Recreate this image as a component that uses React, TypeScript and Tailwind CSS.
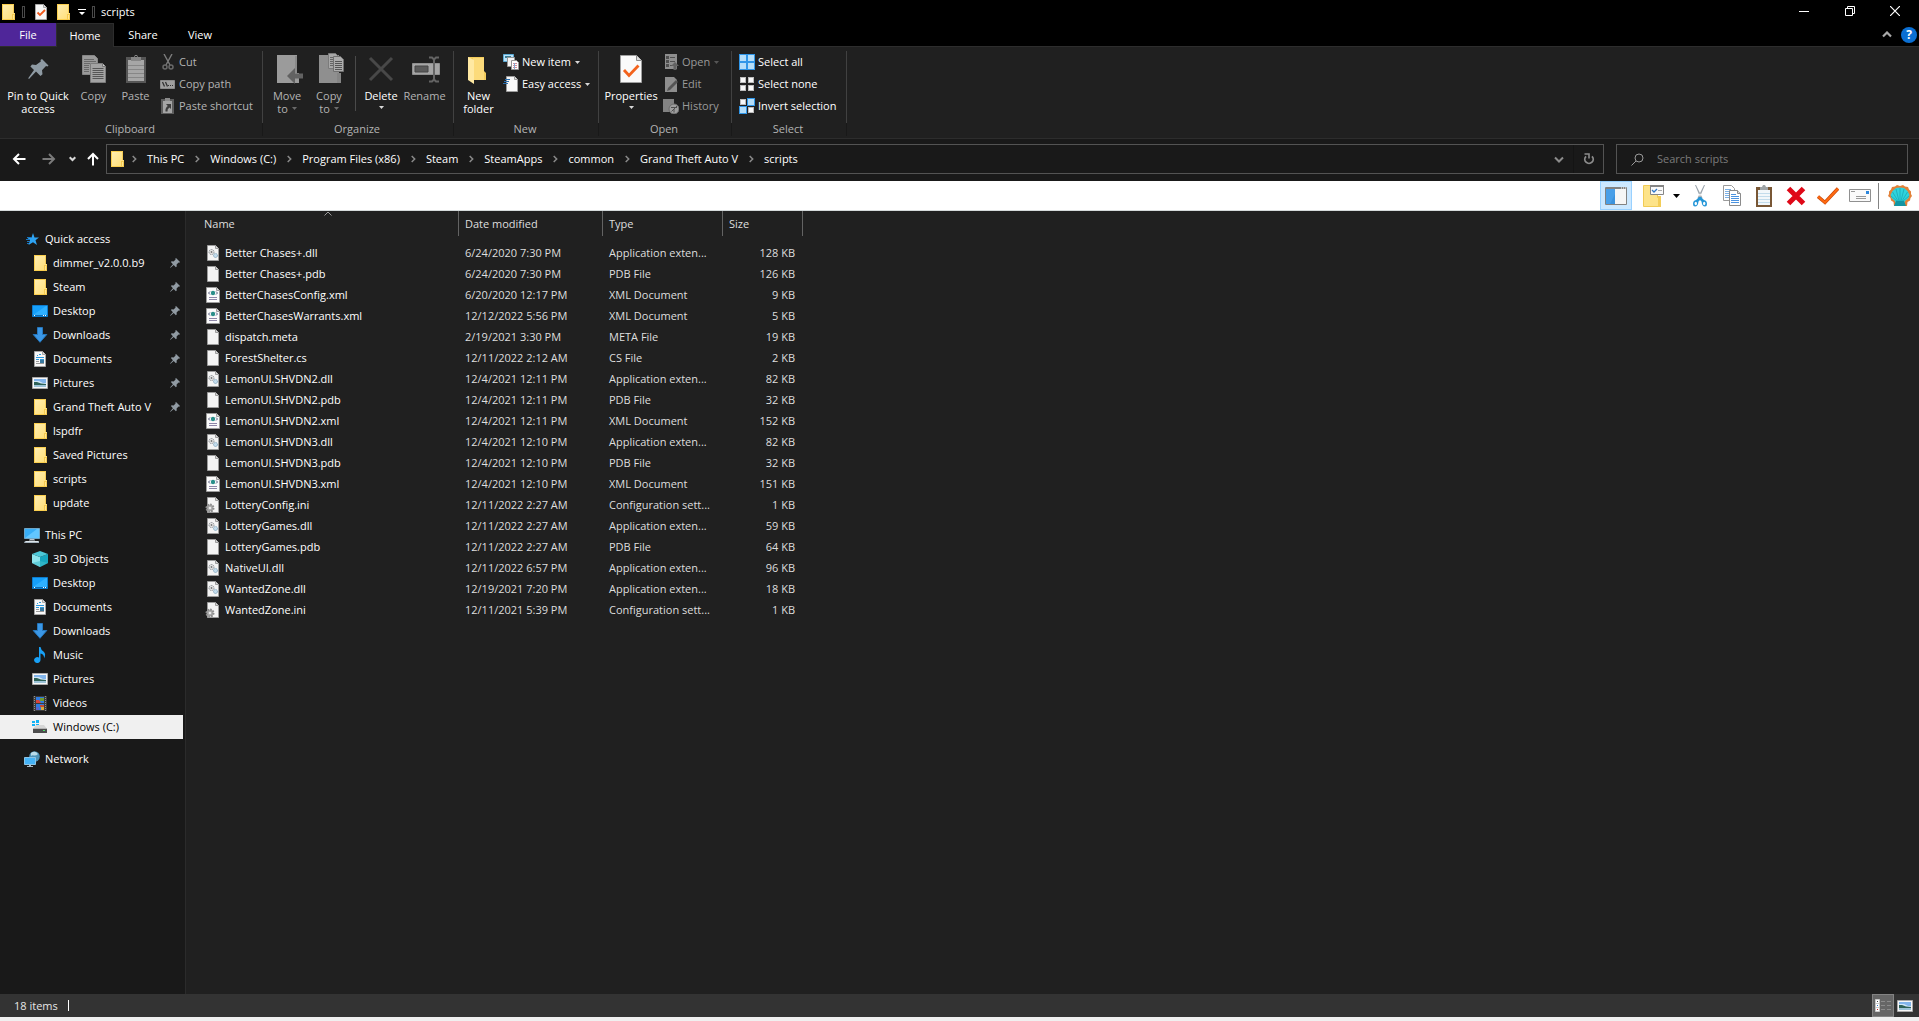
import React from "react";

type IconProps = { className?: string };

/* ---------- Small glyphs ---------- */

function FolderIcon({ className = "" }: IconProps) {
  return (
    <svg width="16" height="16" viewBox="0 0 16 16" className={className} aria-hidden="true">
      <defs>
        <linearGradient id="folderFill" x1="0" y1="0" x2="1" y2="1">
          <stop offset="0" stopColor="#ffefb5" />
          <stop offset="1" stopColor="#ffdd72" />
        </linearGradient>
      </defs>
      <path d="M2 0h12v9h1v7H2z" fill="url(#folderFill)" />
      <path d="M2 0h12v1H3v14h9v1H2z" fill="#fbcf4e" />
      <path d="M13 0h1v9h-1z" fill="#f7cd57" />
      <path d="M12 10h3v6h-3z" fill="#f5ca50" />
      <path d="M13 11h1v4h-1z" fill="#ffe694" />
    </svg>
  );
}

function PropertiesSmallIcon() {
  return (
    <svg width="16" height="16" viewBox="0 0 16 16" aria-hidden="true">
      <path d="M2.500.500h8l3 3v12h-11z" fill="#f7f7f7" stroke="#a8a8a8" />
      <path d="M10.500.500v3h3" fill="#ddd" stroke="#a8a8a8" />
      <path d="M4.500 8.500l2.500 2.500 5-5" fill="none" stroke="#f0591c" strokeWidth="1.800" />
    </svg>
  );
}

function CaretDown({ className = "" }: IconProps) {
  return (
    <svg width="5" height="3" viewBox="0 0 5 3" className={className} aria-hidden="true">
      <path d="M0 0h5L2.500 3z" fill="currentColor" />
    </svg>
  );
}

function Chevron({ className = "" }: IconProps) {
  return (
    <svg width="5" height="8" viewBox="0 0 5 8" className={className} aria-hidden="true">
      <path d="M.7 1l3 3-3 3" fill="none" stroke="#8a8a8a" strokeWidth="1.500" />
    </svg>
  );
}

function PinSmall() {
  return (
    <svg width="10" height="10" viewBox="0 0 10 10" aria-hidden="true">
      <path d="M6 0l4 4-.8.8-.7-.2-1.900 2 .1 1.900-.8.7-2.200-2.200L.5 9.800 0 9.500 2.900 6.200.9 4.100l.8-.8 1.900.1 2-1.900-.3-.8z" fill="#919ba3" />
    </svg>
  );
}

/* ---------- Ribbon icons ---------- */

function PinLarge() {
  return (
    <svg width="32" height="32" viewBox="0 0 32 32" aria-hidden="true">
      <path d="M20 6l6.500 6.500-1 1-1.500-.5-4 4.200.5 4-2 1.800-4.500-4.500-7 7.500-.8-.7 5.800-8.300-3.600-3.500 1.600-2 4 .5 4.800-3.500-.3-1.500z" fill="#8e9aa3" />
    </svg>
  );
}

function CopyLarge() {
  return (
    <svg width="32" height="32" viewBox="0 0 32 32" aria-hidden="true">
      <path d="M4.500 2.500h12l3 3v16h-15z" fill="#9a9a9a" stroke="#868686" />
      <path d="M6 6.500h10M6 8.500h12M6 10.500h6M6 12.500h5M6 14.500h5M6 16.500h5M6 18.500h5" stroke="#696969" />
      <path d="M12.500 10.500h12l3 3v16h-15z" fill="#a3a3a3" stroke="#7c7c7c" />
      <path d="M24.500 10.500v3h3" fill="#ccc" stroke="#777" />
      <path d="M14.500 15.500h11M14.500 17.500h11M14.500 19.500h11M14.500 21.500h11M14.500 23.500h11M14.500 25.500h11" stroke="#555" />
    </svg>
  );
}

function PasteLarge() {
  return (
    <svg width="32" height="32" viewBox="0 0 32 32" aria-hidden="true">
      <path d="M6 4h20v26H6z" fill="#565656" />
      <path d="M8 7h16v21H8z" fill="#a6a6a6" />
      <path d="M8 12.500h16M8 16.500h16M8 20.500h16M8 24.500h16" stroke="#868686" />
      <path d="M11 4h3l1-2h2l1 2h3v4H11z" fill="#858585" />
      <path d="M15 3h2v1h-2z" fill="#222" />
    </svg>
  );
}

function CutSmall() {
  return (
    <svg width="16" height="16" viewBox="0 0 16 16" aria-hidden="true">
      <path d="M4 0l6 11M12 0L6 11" stroke="#7c7c7c" strokeWidth="1.400" />
      <circle cx="5" cy="13" r="2" fill="none" stroke="#696969" strokeWidth="1.500" />
      <circle cx="11" cy="13" r="2" fill="none" stroke="#696969" strokeWidth="1.500" />
    </svg>
  );
}

function CopyPathSmall() {
  return (
    <svg width="16" height="16" viewBox="0 0 16 16" aria-hidden="true">
      <path d="M.5 4.500h14v8H.5z" fill="#a0a0a0" stroke="#8b8b8b" />
      <path d="M2.500 6l2 4.500M5.500 6l2 4.500" stroke="#333" strokeWidth="1.300" />
      <path d="M8 9h1v1H8zM10 9h1v1h-1zM12 9h1v1h-1z" fill="#333" />
    </svg>
  );
}

function PasteShortcutSmall() {
  return (
    <svg width="16" height="16" viewBox="0 0 16 16" aria-hidden="true">
      <path d="M1 1h13v15H1z" fill="#5d5d5d" />
      <path d="M3 3h9v12H3z" fill="#a4a4a4" />
      <path d="M5 0h5v3H5z" fill="#8a8a8a" />
      <path d="M6 6h5v5L9.500 9.500Q7 11 7.500 13.500H5.500Q5 10 7.800 8z" fill="#3d3d3d" />
    </svg>
  );
}

function MoveToLarge() {
  return (
    <svg width="32" height="32" viewBox="0 0 32 32" aria-hidden="true">
      <path d="M6 2h20v18h2v10H6z" fill="#9b9b9b" />
      <path d="M24 3h2v17h-2z" fill="#8a8a8a" />
      <path d="M16 23l8-8v5.500h8v5h-8V31z" fill="#626262" />
    </svg>
  );
}

function CopyToLarge() {
  return (
    <svg width="32" height="32" viewBox="0 0 32 32" aria-hidden="true">
      <path d="M6 2h20v18h2v10H6z" fill="#8f8f8f" />
      <path d="M24 20h4v10h-4z" fill="#858585" />
      <path d="M15.500.5h7l3 3v12h-10z" fill="#a8a8a8" stroke="#7b7b7b" />
      <path d="M17 4.500h6M17 6.500h3M17 8.500h3M17 10.500h3M17 12.500h3" stroke="#666" />
      <path d="M20.500 3.500h7l3 3v12h-10z" fill="#adadad" stroke="#707070" />
      <path d="M22 8.500h7M22 10.500h7M22 12.500h7M22 14.500h7M22 16.500h7" stroke="#555" />
    </svg>
  );
}

function DeleteLarge() {
  return (
    <svg width="32" height="32" viewBox="0 0 32 32" aria-hidden="true">
      <path d="M5 5l22 22M27 5L5 27" stroke="#484848" strokeWidth="3" />
    </svg>
  );
}

function RenameLarge() {
  return (
    <svg width="32" height="32" viewBox="0 0 32 32" aria-hidden="true">
      <path d="M3.500 10.500h27v11h-27z" fill="#a5a5a5" stroke="#8f8f8f" />
      <path d="M6 13h13v6H6z" fill="#5a5a5a" stroke="#444" strokeWidth="1" />
      <path d="M20 4.500h3l2 2 2-2h3M20 28.500h3l2-2 2 2h3M25 6v21" fill="none" stroke="#646464" strokeWidth="2" />
    </svg>
  );
}

function NewFolderLarge() {
  return (
    <svg width="32" height="32" viewBox="0 0 32 32" aria-hidden="true">
      <path d="M5 4h16v14l2 2v7H5z" fill="#f3cc5c" />
      <path d="M10 5h11v22H10z" fill="#fcdb7b" />
      <path d="M5 4l6 3v24l-6-4z" fill="#ffe9a3" />
    </svg>
  );
}

function NewItemSmall() {
  return (
    <svg width="16" height="16" viewBox="0 0 16 16" aria-hidden="true">
      <path d="M.5.500h10v7H.5z" fill="#b9e2fa" stroke="#5caad4" />
      <path d="M2 2h6v2H2z" fill="#3b7b91" />
      <path d="M4.500 3.500h7v9h-7z" fill="#f4f4f4" stroke="#969696" />
      <path d="M8.500 6.500h5l2 2v7h-7z" fill="#fff" stroke="#969696" />
      <path d="M10 9.500h4M10 11.500h4M10 13.500h4" stroke="#d38d9b" />
      <path d="M11.500 9v6" stroke="#87acd6" />
    </svg>
  );
}

function EasyAccessSmall() {
  return (
    <svg width="16" height="16" viewBox="0 0 16 16" aria-hidden="true">
      <path d="M3.500.500h8l3 3v12h-11z" fill="#f8f8f8" stroke="#9d9d9d" />
      <path d="M11.500.500v3h3" fill="#ddd" stroke="#9d9d9d" />
      <path d="M2 3.500h5M1 5.500h5M0 7.500h5" stroke="#2b6fae" />
    </svg>
  );
}

function PropertiesLarge() {
  return (
    <svg width="32" height="32" viewBox="0 0 32 32" aria-hidden="true">
      <path d="M5.500 2.500h16l5 5v22h-21z" fill="#fafafa" stroke="#a0a0a0" />
      <path d="M21.500 2.500v5h5" fill="#ddd" stroke="#8b8b8b" />
      <path d="M9 17l5 5.500L23.500 12.500" fill="none" stroke="#f3631d" strokeWidth="2.800" />
    </svg>
  );
}

function OpenSmall() {
  return (
    <svg width="16" height="16" viewBox="0 0 16 16" aria-hidden="true">
      <path d="M2 0h12v15H2z" fill="#8e8e8e" />
      <path d="M3 2h3v3H3zM3 6h3v3H3zM3 10h3v3H3z" fill="#4f4f4f" />
      <path d="M7 3.500h5M7 7.500h5M7 11.500h3" stroke="#4f4f4f" />
      <path d="M8 12l4-4 4 4h-2.500v4h-3v-4z" fill="#626262" />
    </svg>
  );
}

function EditSmall() {
  return (
    <svg width="16" height="16" viewBox="0 0 16 16" aria-hidden="true">
      <path d="M2 1h9l3 3v12H2z" fill="#8e8e8e" />
      <path d="M4 15l1-3 8-8 2 2-8 8z" fill="#545454" />
    </svg>
  );
}

function HistorySmall() {
  return (
    <svg width="16" height="16" viewBox="0 0 16 16" aria-hidden="true">
      <path d="M0 1h11v7h1v6H0z" fill="#828282" />
      <circle cx="11" cy="11" r="5" fill="#9d9d9d" stroke="#6b6b6b" />
      <path d="M8.500 13.500L14 8M8 9.500h6M11 11v3.500" stroke="#4e4e4e" fill="none" />
    </svg>
  );
}

function Tile({ x, y, on }: { x: number; y: number; on: boolean }) {
  return on ? (
    <rect x={x + 0.5} y={y + 0.5} width="7" height="7" fill="#b5def9" stroke="#3096e8" />
  ) : (
    <rect x={x + 1.5} y={y + 1.5} width="5" height="5" fill="#f8f8f8" stroke="#bcbcbc" />
  );
}

function TilesIcon({ on }: { on: boolean[] }) {
  return (
    <svg width="16" height="16" viewBox="0 0 16 16" aria-hidden="true">
      <Tile x={0} y={0} on={on[0]} />
      <Tile x={8} y={0} on={on[1]} />
      <Tile x={0} y={8} on={on[2]} />
      <Tile x={8} y={8} on={on[3]} />
    </svg>
  );
}

/* ---------- Navigation pane icons ---------- */

function StarIcon() {
  return (
    <svg width="16" height="16" viewBox="0 0 16 16" aria-hidden="true">
      <path d="M9 2l1.500 4.500H15L11.500 9.300l1.500 4.700-4-2.800L4.500 14 6 9.300 3 6.500h4.500z" fill="#2ea3f2" />
      <path d="M3 6.500h4M2 8.500h4M3 10.500h3M3 12.500h2" stroke="#1b76bd" />
    </svg>
  );
}

function DesktopIcon() {
  return (
    <svg width="16" height="16" viewBox="0 0 16 16" aria-hidden="true">
      <path d="M.5 2.500h15v11H.5z" fill="#16a0fb" stroke="#0d7ccd" />
      <path d="M1 12L14 3h1v9z" fill="#2fb0ff" />
      <path d="M1 12h14v1H1z" fill="#0c6cb5" />
      <path d="M2 12h1v1H2zM11 12h1v1h-1zM13 12h1v1h-1z" fill="#fff" />
    </svg>
  );
}

function DownloadsIcon() {
  return (
    <svg width="16" height="16" viewBox="0 0 16 16" aria-hidden="true">
      <path d="M5.500.500h5v7h4.300L8 15.300 1.200 7.500h4.300z" fill="#3b97e6" stroke="#2577bd" />
    </svg>
  );
}

function DocumentsIcon() {
  return (
    <svg width="16" height="16" viewBox="0 0 16 16" aria-hidden="true">
      <path d="M2.500.500h8l3 3v12h-11z" fill="#f8f8f8" stroke="#a5a5a5" />
      <path d="M10.500.500v3h3" fill="#ddd" stroke="#a5a5a5" />
      <path d="M5 4.500h1M7 3.500h2M4 6.500h8M4 8.500h3M8 8.500h4" stroke="#2d9ade" />
      <path d="M4 10.500h3M4 12.500h8" stroke="#9a9a9a" />
      <path d="M8 9h4v3H8z" fill="#39799f" />
    </svg>
  );
}

function PicturesIcon() {
  return (
    <svg width="16" height="16" viewBox="0 0 16 16" aria-hidden="true">
      <path d="M.5 2.500h15v11H.5z" fill="#f7f7f7" stroke="#a9a9a9" />
      <path d="M2 4h12v8H2z" fill="#82b5ec" />
      <path d="M2 6h5l4 2h3v1H2z" fill="#cfe6f8" />
      <path d="M2 7l3 0 4 1.500 5 .5v2H2z" fill="#2e6257" />
      <path d="M2 10h12v2H2z" fill="#9cc3d8" />
    </svg>
  );
}

function ThisPcIcon() {
  return (
    <svg width="16" height="16" viewBox="0 0 16 16" aria-hidden="true">
      <path d="M.5 1.500h15v10H.5z" fill="#38aef7" stroke="#6ea6c8" />
      <path d="M1 11L13 2h2v9z" fill="#62c6ff" />
      <path d="M6 12h4v1H6zM5 12.500h6v1H5z" fill="#b9c4cc" />
      <path d="M1 14h14v2H0z" fill="#a7b4be" />
      <path d="M2 14.500h12" stroke="#dde5ea" />
    </svg>
  );
}

function ObjectsIcon() {
  return (
    <svg width="16" height="16" viewBox="0 0 16 16" aria-hidden="true">
      <path d="M0 3l8 3v10l-8-4z" fill="#8ee6ee" />
      <path d="M16 3L8 6v10l8-4z" fill="#17a7c0" />
      <path d="M0 3l8-3 8 3-8 3z" fill="#4cc9d9" />
      <path d="M0 12l8-2 8 2-8 4z" fill="#40bccb" opacity=".6" />
    </svg>
  );
}

function MusicIcon() {
  return (
    <svg width="16" height="16" viewBox="0 0 16 16" aria-hidden="true">
      <path d="M7 0h1.500Q9 3 11.500 4.500 14.500 7 12 11.500q.500-4-3.500-5V13a3.200 3 0 1 1-1.500-2.500z" fill="#18a0f5" />
    </svg>
  );
}

function VideosIcon() {
  return (
    <svg width="16" height="16" viewBox="0 0 16 16" aria-hidden="true">
      <path d="M1 1h14v15H1z" fill="#3b3b3b" />
      <path d="M2.500 1v15M13.500 1v15" stroke="#909090" strokeDasharray="1 1" />
      <path d="M4 2h8v6H4zM4 9h8v6H4z" fill="#2f7be0" />
      <path d="M4 5h3l2 3H4z" fill="#d8433a" />
      <path d="M8 3h4v3H8z" fill="#6f9a2f" />
      <path d="M8 10h4v2H8z" fill="#c54a35" />
      <path d="M4 12h3v3H4z" fill="#5b64c8" />
      <path d="M9 12h3v3H9z" fill="#d8aa3a" />
    </svg>
  );
}

function DriveIcon() {
  return (
    <svg width="16" height="16" viewBox="0 0 16 16" aria-hidden="true">
      <path d="M0 2h3v2H0zM4 1h3v3H4zM0 5h3v2H0zM4 5h3v3H4z" fill="#12b2f5" />
      <path d="M4 6h8l3 4H1z" fill="#d6d6d6" />
      <path d="M1 10h14v4H1z" fill="#4d4d4d" />
      <path d="M1 9h14v1H1z" fill="#b5b5b5" />
      <path d="M11 11h2v1h-2z" fill="#4fe06a" />
    </svg>
  );
}

function NetworkIcon() {
  return (
    <svg width="16" height="16" viewBox="0 0 16 16" aria-hidden="true">
      <circle cx="10.500" cy="5.500" r="5.300" fill="#4d93b8" />
      <path d="M7 2q4-3 7 1-2 2-4 1.500T7 5z" fill="#b9dbea" />
      <path d="M.5 6.500h11v7H.5z" fill="#45b3f7" stroke="#8cc4e6" />
      <path d="M5 14h2v1H5zM3 15h6v1H3z" fill="#a9bac6" />
    </svg>
  );
}

/* ---------- File icons ---------- */

function Page() {
  return (
    <>
      <path d="M2.500.500h8l3 3v12h-11z" fill="#f4f4f4" stroke="#9c9c9c" />
      <path d="M10.500.500v3h3" fill="#d8d8d8" stroke="#9c9c9c" />
    </>
  );
}

type FileKind = "dll" | "plain" | "xml" | "ini";

function FileIcon({ kind }: { kind: FileKind }) {
  return (
    <svg width="16" height="16" viewBox="0 0 16 16" aria-hidden="true">
      {kind === "xml" ? (
        <>
          <path d="M1.500.500h10l3 3v12h-13z" fill="#fbfbfb" stroke="#9c9c9c" />
          <path d="M11.500.500v3h3" fill="#d8d8d8" stroke="#9c9c9c" />
          <circle cx="8" cy="6" r="2.200" fill="#2b8f8a" />
          <path d="M5 4.500L3.500 6 5 7.500M11 4.500L12.500 6 11 7.500" fill="none" stroke="#555c80" />
          <path d="M4 10.500h8M4 12.500h8" stroke="#8e86a8" />
        </>
      ) : (
        <Page />
      )}
      {kind === "dll" && (
        <>
          <circle cx="6.500" cy="7" r="2.500" fill="#e4e4e4" stroke="#8b8f94" strokeDasharray="1.500 .7" />
          <circle cx="6.500" cy="7" r=".9" fill="#777" />
          <circle cx="10.500" cy="10.500" r="2" fill="#c3dcec" stroke="#7fa3bb" strokeDasharray="1.200 .6" />
        </>
      )}
      {kind === "ini" && (
        <>
          <circle cx="5" cy="11" r="3.500" fill="#a7a7a7" stroke="#8d8d8d" strokeWidth="2" strokeDasharray="1.600 1.100" />
          <circle cx="5" cy="11" r="1.300" fill="#e9e9e9" />
        </>
      )}
    </svg>
  );
}

/* ---------- Ribbon pieces ---------- */

function BigButton({
  icon,
  lines,
  width,
  caret,
  dim,
}: {
  icon: React.ReactNode;
  lines: string[];
  width: string;
  caret?: "inline" | "below";
  dim?: boolean;
}) {
  return (
    <button type="button" className={`flex flex-col items-center pt-1 ${width} ${dim ? "text-[#b4b4b4]" : "text-white"}`}>
      {icon}
      <span className="mt-1 flex flex-col items-center leading-[13px]">
        {lines.map((line, i) => (
          <span key={line} className="flex items-center gap-1 whitespace-nowrap">
            {line}
            {caret === "inline" && i === lines.length - 1 && <CaretDown className="text-[#6a6a6a]" />}
          </span>
        ))}
      </span>
      {caret === "below" && <CaretDown className="mt-1 text-[#d8d8d8]" />}
    </button>
  );
}

function SmallButton({
  icon,
  label,
  tone = "text-white",
  caret,
}: {
  icon: React.ReactNode;
  label: string;
  tone?: string;
  caret?: string;
}) {
  return (
    <button type="button" className={`flex h-[22px] items-center gap-[3px] whitespace-nowrap ${tone}`}>
      {icon}
      <span>{label}</span>
      {caret && <CaretDown className={`ml-px ${caret}`} />}
    </button>
  );
}

function RibbonGroup({ label, width, children }: { label: string; width: string; children: React.ReactNode }) {
  return (
    <section aria-label={label} className={`flex ${width}`}>
      <div className="flex min-w-0 grow flex-col">
        <div className="flex h-[73px] items-start">{children}</div>
        <div className="pr-[2px] text-center leading-[14px] text-[#b4b4b4]">{label}</div>
      </div>
      <div className="my-[2px] flex w-px flex-col">
        <div className="h-[72px] bg-[#414141]" />
        <div className="h-[13px] bg-[#191919]" />
      </div>
    </section>
  );
}

const dimTone = "text-[#b4b4b4]";

function Ribbon() {
  return (
    <div className="flex h-[93px] border-y border-[#2d2d2d] bg-[#202020] pt-[2px]">
      <RibbonGroup label="Clipboard" width="w-[263px]">
        <div className="flex pl-[3px]">
          <BigButton width="w-[70px]" icon={<PinLarge />} lines={["Pin to Quick", "access"]} />
          <BigButton width="w-[41px]" icon={<CopyLarge />} lines={["Copy"]} dim />
          <BigButton width="w-[43px]" icon={<PasteLarge />} lines={["Paste"]} dim />
        </div>
        <div className="flex flex-col pl-[3px] pt-[2px]">
          <SmallButton icon={<CutSmall />} label="Cut" tone={dimTone} />
          <SmallButton icon={<CopyPathSmall />} label="Copy path" tone={dimTone} />
          <SmallButton icon={<PasteShortcutSmall />} label="Paste shortcut" tone={dimTone} />
        </div>
      </RibbonGroup>
      <RibbonGroup label="Organize" width="w-[191px]">
        <div className="flex pl-[3px]">
          <BigButton width="w-[42px]" icon={<MoveToLarge />} lines={["Move", "to"]} caret="inline" dim />
          <BigButton width="w-[42px]" icon={<CopyToLarge />} lines={["Copy", "to"]} caret="inline" dim />
          <div className="mx-[5px] mt-[7px] h-[55px] w-px bg-[#4a4a4a]" />
          <BigButton width="w-[40px]" icon={<DeleteLarge />} lines={["Delete"]} caret="below" />
          <BigButton width="w-[47px]" icon={<RenameLarge />} lines={["Rename"]} dim />
        </div>
      </RibbonGroup>
      <RibbonGroup label="New" width="w-[145px]">
        <BigButton width="w-[49px]" icon={<NewFolderLarge />} lines={["New", "folder"]} />
        <div className="flex flex-col pt-[2px]">
          <SmallButton icon={<NewItemSmall />} label="New item" caret="text-[#d8d8d8]" />
          <SmallButton icon={<EasyAccessSmall />} label="Easy access" caret="text-[#d8d8d8]" />
        </div>
      </RibbonGroup>
      <RibbonGroup label="Open" width="w-[133px]">
        <BigButton width="w-[64px]" icon={<PropertiesLarge />} lines={["Properties"]} caret="below" />
        <div className="flex flex-col pt-[2px]">
          <SmallButton icon={<OpenSmall />} label="Open" tone="text-[#9a9a9a]" caret="text-[#565656]" />
          <SmallButton icon={<EditSmall />} label="Edit" tone="text-[#9a9a9a]" />
          <SmallButton icon={<HistorySmall />} label="History" tone="text-[#9a9a9a]" />
        </div>
      </RibbonGroup>
      <RibbonGroup label="Select" width="w-[115px]">
        <div className="flex flex-col pl-[7px] pt-[2px]">
          <SmallButton icon={<TilesIcon on={[true, true, true, true]} />} label="Select all" />
          <SmallButton icon={<TilesIcon on={[false, false, false, false]} />} label="Select none" />
          <SmallButton icon={<TilesIcon on={[false, true, true, false]} />} label="Invert selection" />
        </div>
      </RibbonGroup>
    </div>
  );
}

/* ---------- Top bars ---------- */

function TitleBar() {
  return (
    <header className="flex h-[23px] items-start bg-black text-white">
      <div className="flex items-center pt-[3px]">
        <FolderIcon />
        <span className="ml-[6px] h-3 w-[3px] border border-[#4a4a4a]" />
        <button type="button" aria-label="Properties" className="ml-2">
          <PropertiesSmallIcon />
        </button>
        <button type="button" aria-label="New folder" className="ml-[6px]">
          <FolderIcon />
        </button>
        <button type="button" aria-label="Customize Quick Access Toolbar" className="ml-[7px]">
          <svg width="8" height="8" viewBox="0 0 8 8" aria-hidden="true">
            <path d="M0 1h8v1H0zM1 4h6L4 7z" fill="#fff" />
          </svg>
        </button>
        <span className="ml-[6px] h-3 w-[3px] border border-[#4a4a4a]" />
        <h1 className="ml-[6px] leading-[18px]">scripts</h1>
      </div>
      <div className="ml-auto flex pr-[1px]">
        <button type="button" aria-label="Minimize" className="flex h-[21px] w-[46px] items-center justify-center">
          <svg width="10" height="10" viewBox="0 0 10 10" aria-hidden="true">
            <path d="M0 5.500h10" stroke="#fff" />
          </svg>
        </button>
        <button type="button" aria-label="Restore" className="flex h-[21px] w-[45px] items-center justify-center">
          <svg width="10" height="10" viewBox="0 0 10 10" aria-hidden="true">
            <path d="M.5 2.500h7v7h-7zM2.500 2.500v-2h7v7h-2" fill="none" stroke="#fff" />
          </svg>
        </button>
        <button type="button" aria-label="Close" className="flex h-[21px] w-[46px] items-center justify-center">
          <svg width="10" height="10" viewBox="0 0 10 10" aria-hidden="true">
            <path d="M0 0l10 10M10 0L0 10" stroke="#fff" strokeWidth="1.200" />
          </svg>
        </button>
      </div>
    </header>
  );
}

function Tabs() {
  return (
    <nav aria-label="Ribbon tabs" className="flex h-[23px] bg-black text-white">
      <button type="button" className="w-14 bg-[#4f2699]">File</button>
      <button type="button" className="relative -mb-px w-[58px] border border-b-0 border-[#2d2d2d] bg-[#202020]">Home</button>
      <button type="button" className="w-[58px]">Share</button>
      <button type="button" className="w-[56px]">View</button>
      <div className="ml-auto flex items-center gap-[9px] pr-[2px]">
        <button type="button" aria-label="Minimize the Ribbon">
          <svg width="10" height="7" viewBox="0 0 10 7" aria-hidden="true">
            <path d="M1 5.500l4-4 4 4" fill="none" stroke="#a9a9a9" strokeWidth="2.200" />
          </svg>
        </button>
        <button type="button" aria-label="Help" className="size-4 rounded-full bg-[#0b6fd3] text-[12px] font-bold leading-4">
          ?
        </button>
      </div>
    </nav>
  );
}

const crumbs = ["This PC", "Windows (C:)", "Program Files (x86)", "Steam", "SteamApps", "common", "Grand Theft Auto V", "scripts"];

function AddressBar() {
  return (
    <div className="flex h-[42px] items-center bg-[#191919] pb-[2px] pr-[11px] text-white">
      <div className="flex items-center pl-3">
        <button type="button" aria-label="Back">
          <svg width="14" height="14" viewBox="0 0 14 14" aria-hidden="true">
            <path d="M13.500 7H2M7 2L2 7l5 5" fill="none" stroke="#fff" strokeWidth="2" />
          </svg>
        </button>
        <button type="button" aria-label="Forward" className="ml-4">
          <svg width="14" height="14" viewBox="0 0 14 14" aria-hidden="true">
            <path d="M.5 7H12M7 2l5 5-5 5" fill="none" stroke="#7a7a7a" strokeWidth="2" />
          </svg>
        </button>
        <button type="button" aria-label="Recent locations" className="ml-[13px]">
          <svg width="7" height="6" viewBox="0 0 7 6" aria-hidden="true">
            <path d="M.7 1.200l2.800 2.800 2.800-2.800" fill="none" stroke="#d8d8d8" strokeWidth="2" />
          </svg>
        </button>
        <button type="button" aria-label="Up" className="ml-[10px]">
          <svg width="14" height="14" viewBox="0 0 14 14" aria-hidden="true">
            <path d="M7 13.500V2M2 7l5-5 5 5" fill="none" stroke="#fff" strokeWidth="2" />
          </svg>
        </button>
      </div>
      <div className="ml-[6px] flex h-[30px] min-w-0 grow items-center border border-[#535353]">
        <FolderIcon className="ml-[2px]" />
        <ol className="flex items-center">
          {crumbs.map((crumb) => (
            <li key={crumb} className="flex items-center whitespace-nowrap pl-[11px] first:pl-[7px]">
              <Chevron className="mr-[10px]" />
              <button type="button">{crumb}</button>
            </li>
          ))}
        </ol>
        <div className="ml-auto flex h-full items-center">
          <button type="button" aria-label="Previous locations" className="flex h-full w-[29px] items-center justify-center border-r border-[#141414]">
            <svg width="10" height="7" viewBox="0 0 10 7" aria-hidden="true">
              <path d="M1 1.500l4 4 4-4" fill="none" stroke="#8c8c8c" strokeWidth="2" />
            </svg>
          </button>
          <button type="button" aria-label="Refresh" className="flex h-full w-[29px] items-center justify-center">
            <svg width="12" height="12" viewBox="0 0 12 12" aria-hidden="true">
              <path d="M3 3.300A4.200 4.200 0 1 0 9 3.300" fill="none" stroke="#8c8c8c" strokeWidth="1.800" />
              <path d="M1.500 1h4.500v4.500" fill="none" stroke="#8c8c8c" strokeWidth="1.600" />
            </svg>
          </button>
        </div>
      </div>
      <label className="ml-3 flex h-[30px] w-[292px] items-center border border-[#535353]">
        <svg width="13" height="13" viewBox="0 0 13 13" className="ml-[14px]" aria-hidden="true">
          <circle cx="8" cy="5" r="4" fill="none" stroke="#9a9a9a" />
          <path d="M5 8L.5 12.500" stroke="#9a9a9a" />
        </svg>
        <input type="text" aria-label="Search scripts" placeholder="Search scripts" className="ml-[13px] min-w-0 grow bg-transparent text-white outline-none placeholder:text-[#7b7b7b]" />
      </label>
    </div>
  );
}

function ToolButton({ label, className = "", children }: { label: string; className?: string; children: React.ReactNode }) {
  return (
    <button type="button" aria-label={label} className={`flex h-full items-center justify-center ${className}`}>
      {children}
    </button>
  );
}

function ShellToolbar() {
  return (
    <div className="flex h-[30px] items-center justify-end border-b border-[#d5dadb] bg-white pr-[7px]">
      <ToolButton label="Navigation pane" className="w-8 border border-[#99d1ff] bg-[#cce8ff]">
        <svg width="22" height="18" viewBox="0 0 22 18" aria-hidden="true">
          <path d="M.5.500h21v17H.5z" fill="#f6f6f6" stroke="#828282" />
          <path d="M1 0h20v2H1z" fill="#828282" />
          <path d="M16 1h1M18 1h1M20 1h1" stroke="#fff" />
          <path d="M1 2h9v15H1z" fill="#3c93dd" />
          <path d="M1 2h9v5L5 17H1z" fill="#499fe8" />
        </svg>
      </ToolButton>
      <ToolButton label="Folder options" className="ml-[11px] w-[22px]">
        <svg width="22" height="22" viewBox="0 0 22 22" aria-hidden="true">
          <path d="M.5.500h14v12h3v9H.5z" fill="#fde389" stroke="#f1cb55" />
          <path d="M15 11h3v11h-3z" fill="#f3cd58" />
          <path d="M7.500.500h13v9h-13z" fill="#fafafa" stroke="#858585" />
          <path d="M7 0h14v2H7z" fill="#858585" />
          <path d="M9 5l2 2 3-3" fill="none" stroke="#3078c8" strokeWidth="1.300" />
          <path d="M15 5.500h4" stroke="#aaa" />
        </svg>
      </ToolButton>
      <ToolButton label="Folder options menu" className="ml-2 w-[7px]">
        <svg width="7" height="4" viewBox="0 0 7 4" aria-hidden="true">
          <path d="M0 0h7L3.500 4z" fill="#000" />
        </svg>
      </ToolButton>
      <ToolButton label="Cut" className="ml-3 w-4">
        <svg width="16" height="22" viewBox="0 0 16 22" aria-hidden="true">
          <path d="M3 0l1 0 6.500 13h-2zM13 0l-1 0L5.500 13h2z" fill="#9aa3ab" />
          <path d="M7 12h2l3 3q3 .5 3 4 0 2.500-2 2.500-3 0-3.500-5L8 15l-1.500 1.500Q6 21.500 3 21.500q-2 0-2-2.500 0-3.500 3-4z" fill="#2496d8" />
          <ellipse cx="3.800" cy="18.500" rx="1.200" ry="1.800" fill="#fff" />
          <ellipse cx="12.200" cy="18.500" rx="1.200" ry="1.800" fill="#fff" />
        </svg>
      </ToolButton>
      <ToolButton label="Copy" className="ml-[15px] w-[18px]">
        <svg width="18" height="22" viewBox="0 0 18 22" aria-hidden="true">
          <path d="M.5.500h8l3 3v12H.5z" fill="#fff" stroke="#9b9b9b" />
          <path d="M2 4.500h6M2 6.500h4M2 8.500h4M2 10.500h4M2 12.500h4" stroke="#7cb1e6" />
          <path d="M6.500 5.500h8l3 3v12h-11z" fill="#fff" stroke="#8b8b8b" />
          <path d="M14.500 5.500v3h3" fill="#ddd" stroke="#8b8b8b" />
          <path d="M8 9.500h5M8 11.500h8M8 13.500h8M8 15.500h8M8 17.500h8" stroke="#4b93e0" />
        </svg>
      </ToolButton>
      <ToolButton label="Paste" className="ml-[15px] w-4">
        <svg width="16" height="22" viewBox="0 0 16 22" aria-hidden="true">
          <path d="M0 2h16v20H0z" fill="#795735" />
          <path d="M2 5h12v15H2z" fill="#f2f7fa" />
          <path d="M2 8.500h12M2 11.500h12M2 14.500h12M2 17.500h12" stroke="#c3dceb" />
          <path d="M4 2h2l1-2h2l1 2h2v3H4z" fill="#9fa5a8" />
        </svg>
      </ToolButton>
      <ToolButton label="Delete" className="ml-[14px] w-5">
        <svg width="20" height="20" viewBox="0 0 20 20" aria-hidden="true">
          <path d="M2.500 2.500l15 15M17.500 2.500l-15 15" stroke="#df0817" strokeWidth="5" />
        </svg>
      </ToolButton>
      <ToolButton label="Properties" className="ml-[11px] w-[22px]">
        <svg width="22" height="18" viewBox="0 0 22 18" aria-hidden="true">
          <path d="M1 9.500l7 6L21 1.500" fill="none" stroke="#c7480d" strokeWidth="3.400" />
          <path d="M1 9.500l7 6L21 1.500" fill="none" stroke="#ff6a10" strokeWidth="2" />
        </svg>
      </ToolButton>
      <ToolButton label="E-mail" className="ml-[10px] w-[22px]">
        <svg width="22" height="13" viewBox="0 0 22 13" aria-hidden="true">
          <path d="M.5.500h21v12H.5z" fill="#fafafa" stroke="#909090" />
          <path d="M2 2.500h4M7 7.500h10M7 9.500h10" stroke="#999" />
          <path d="M17 2h3v3h-3z" fill="#2c86dc" />
        </svg>
      </ToolButton>
      <div className="ml-[7px] h-[26px] w-px bg-[#838383]" />
      <ToolButton label="Classic Shell settings" className="ml-[9px] w-6">
        <svg width="24" height="22" viewBox="0 0 24 22" aria-hidden="true">
          <path d="M9 0l3 1 3-1 2 1.500 3 .5 1 2.500 2 2V9l1 2-1.500 2-.5 2.500-2.500 1.500-.5 4H6l-.5-4L3 15.500 2.500 13 0 11l1-2V6.500l2-2L4 2l3-.5z" fill="#e28138" />
          <path d="M12 2.500l4 .500 3.500 3L21.500 10l-1 3-3.500 3-1 3H8l-1-3-3.500-3-1-3L4.500 6 8 3z" fill="#2fd3dd" />
          <path d="M12 16V3M11 16L8 4M13 16l3-12M10 16L4.500 7M14 16l5.500-9M9 16l-6-5M15 16l6-5" stroke="#149aa8" strokeWidth=".6" />
          <path d="M8 16h8l2 5H6z" fill="#1295a3" />
        </svg>
      </ToolButton>
    </div>
  );
}

/* ---------- Navigation pane ---------- */

type NavItem = { label: string; icon: React.ReactNode; root?: boolean; pinned?: boolean; selected?: boolean };

const navGroups: NavItem[][] = [
  [
    { label: "Quick access", icon: <StarIcon />, root: true },
    { label: "dimmer_v2.0.0.b9", icon: <FolderIcon />, pinned: true },
    { label: "Steam", icon: <FolderIcon />, pinned: true },
    { label: "Desktop", icon: <DesktopIcon />, pinned: true },
    { label: "Downloads", icon: <DownloadsIcon />, pinned: true },
    { label: "Documents", icon: <DocumentsIcon />, pinned: true },
    { label: "Pictures", icon: <PicturesIcon />, pinned: true },
    { label: "Grand Theft Auto V", icon: <FolderIcon />, pinned: true },
    { label: "lspdfr", icon: <FolderIcon /> },
    { label: "Saved Pictures", icon: <FolderIcon /> },
    { label: "scripts", icon: <FolderIcon /> },
    { label: "update", icon: <FolderIcon /> },
  ],
  [
    { label: "This PC", icon: <ThisPcIcon />, root: true },
    { label: "3D Objects", icon: <ObjectsIcon /> },
    { label: "Desktop", icon: <DesktopIcon /> },
    { label: "Documents", icon: <DocumentsIcon /> },
    { label: "Downloads", icon: <DownloadsIcon /> },
    { label: "Music", icon: <MusicIcon /> },
    { label: "Pictures", icon: <PicturesIcon /> },
    { label: "Videos", icon: <VideosIcon /> },
    { label: "Windows (C:)", icon: <DriveIcon />, selected: true },
  ],
  [{ label: "Network", icon: <NetworkIcon />, root: true }],
];

function NavigationPane() {
  return (
    <nav aria-label="Folders" className="flex w-[183px] shrink-0 flex-col gap-2 bg-[#191919] pt-4 text-white">
      {navGroups.map((group) => (
        <ul key={group[0].label}>
          {group.map((item) => (
            <li key={item.label}>
              <button
                type="button"
                className={`flex h-6 w-full items-center gap-[5px] whitespace-nowrap pr-[3px] ${item.root ? "pl-6" : "pl-8"} ${
                  item.selected ? "bg-[#f0f0f0] text-black" : ""
                }`}
              >
                {item.icon}
                <span className="grow text-left">{item.label}</span>
                {item.pinned && <PinSmall />}
              </button>
            </li>
          ))}
        </ul>
      ))}
    </nav>
  );
}

/* ---------- File list ---------- */

type FileRow = [name: string, date: string, type: string, size: string, kind: FileKind];

const files: FileRow[] = [
  ["Better Chases+.dll", "6/24/2020 7:30 PM", "Application exten...", "128 KB", "dll"],
  ["Better Chases+.pdb", "6/24/2020 7:30 PM", "PDB File", "126 KB", "plain"],
  ["BetterChasesConfig.xml", "6/20/2020 12:17 PM", "XML Document", "9 KB", "xml"],
  ["BetterChasesWarrants.xml", "12/12/2022 5:56 PM", "XML Document", "5 KB", "xml"],
  ["dispatch.meta", "2/19/2021 3:30 PM", "META File", "19 KB", "plain"],
  ["ForestShelter.cs", "12/11/2022 2:12 AM", "CS File", "2 KB", "plain"],
  ["LemonUI.SHVDN2.dll", "12/4/2021 12:11 PM", "Application exten...", "82 KB", "dll"],
  ["LemonUI.SHVDN2.pdb", "12/4/2021 12:11 PM", "PDB File", "32 KB", "plain"],
  ["LemonUI.SHVDN2.xml", "12/4/2021 12:11 PM", "XML Document", "152 KB", "xml"],
  ["LemonUI.SHVDN3.dll", "12/4/2021 12:10 PM", "Application exten...", "82 KB", "dll"],
  ["LemonUI.SHVDN3.pdb", "12/4/2021 12:10 PM", "PDB File", "32 KB", "plain"],
  ["LemonUI.SHVDN3.xml", "12/4/2021 12:10 PM", "XML Document", "151 KB", "xml"],
  ["LotteryConfig.ini", "12/11/2022 2:27 AM", "Configuration sett...", "1 KB", "ini"],
  ["LotteryGames.dll", "12/11/2022 2:27 AM", "Application exten...", "59 KB", "dll"],
  ["LotteryGames.pdb", "12/11/2022 2:27 AM", "PDB File", "64 KB", "plain"],
  ["NativeUI.dll", "12/11/2022 6:57 PM", "Application exten...", "96 KB", "dll"],
  ["WantedZone.dll", "12/19/2021 7:20 PM", "Application exten...", "18 KB", "dll"],
  ["WantedZone.ini", "12/11/2021 5:39 PM", "Configuration sett...", "1 KB", "ini"],
];

const headCell = "h-[25px] border-r border-[#636363] pl-[6px] text-left font-normal";

function FileList() {
  return (
    <main className="grow bg-[#202020] pl-3">
      <table className="table-fixed border-separate border-spacing-0 text-[#dedede]">
        <colgroup>
          <col className="w-[261px]" />
          <col className="w-[144px]" />
          <col className="w-[120px]" />
          <col className="w-[80px]" />
        </colgroup>
        <thead>
          <tr>
            <th scope="col" className={`${headCell} relative`}>
              Name
              <svg width="8" height="5" viewBox="0 0 8 5" className="absolute left-1/2 top-0 -translate-x-1/2" aria-hidden="true">
                <path d="M.5 4.500L4 1l3.500 3.500" fill="none" stroke="#9a9a9a" />
              </svg>
            </th>
            <th scope="col" className={headCell}>Date modified</th>
            <th scope="col" className={headCell}>Type</th>
            <th scope="col" className={headCell}>Size</th>
          </tr>
        </thead>
        <tbody className="before:block before:h-[6px]">
          {files.map(([name, date, type, size, kind]) => (
            <tr key={name} className="h-[21px] whitespace-nowrap">
              <td className="p-0 pl-[7px]">
                <div className="flex items-center gap-1 text-white">
                  <FileIcon kind={kind} />
                  {name}
                </div>
              </td>
              <td className="p-0 pl-[6px]">{date}</td>
              <td className="p-0 pl-[6px]">{type}</td>
              <td className="p-0 pr-2 text-right">{size}</td>
            </tr>
          ))}
        </tbody>
      </table>
    </main>
  );
}

function StatusBar() {
  return (
    <footer className="flex h-[27px] items-stretch border-b-4 border-[#f0f0f0] bg-[#333333] text-[#e6e6e6]">
      <div className="flex items-center pl-[14px]">
        <span>18 items</span>
        <span className="ml-[10px] h-[11px] w-px bg-white" />
      </div>
      <div className="ml-auto flex items-center pr-[6px]">
        <button type="button" aria-label="Details view" className="flex h-full w-[22px] items-center justify-center border border-[#838383] bg-[#666666]">
          <svg width="16" height="14" viewBox="0 0 16 14" aria-hidden="true">
            <path d="M.5.500h4v4h-4zM.5 4.500h4v4h-4zM.5 8.500h4v4h-4z" fill="#fff" stroke="#c9c9c9" />
            <path d="M2 2h1v1H2z" fill="#444" />
            <path d="M2 6h1v1H2z" fill="#2876cf" />
            <path d="M2 10h1v1H2z" fill="#c22" />
            <path d="M6 2.500h4M12 2.500h4M6 6.500h4M12 6.500h4M6 10.500h4M12 10.500h4" stroke="#8b8b8b" />
          </svg>
        </button>
        <button type="button" aria-label="Large thumbnails view" className="ml-[3px]">
          <PicturesIcon />
        </button>
      </div>
    </footer>
  );
}

export default function App() {
  return (
    <div className="flex min-h-screen flex-col bg-black font-['Open_Sans','Noto_Sans',sans-serif] text-[11px] leading-4">
      <TitleBar />
      <Tabs />
      <Ribbon />
      <AddressBar />
      <ShellToolbar />
      <div className="flex grow">
        <NavigationPane />
        <div className="w-[3px] shrink-0 border-r border-[#2b2b2b] bg-[#191919]" />
        <FileList />
      </div>
      <StatusBar />
    </div>
  );
}
